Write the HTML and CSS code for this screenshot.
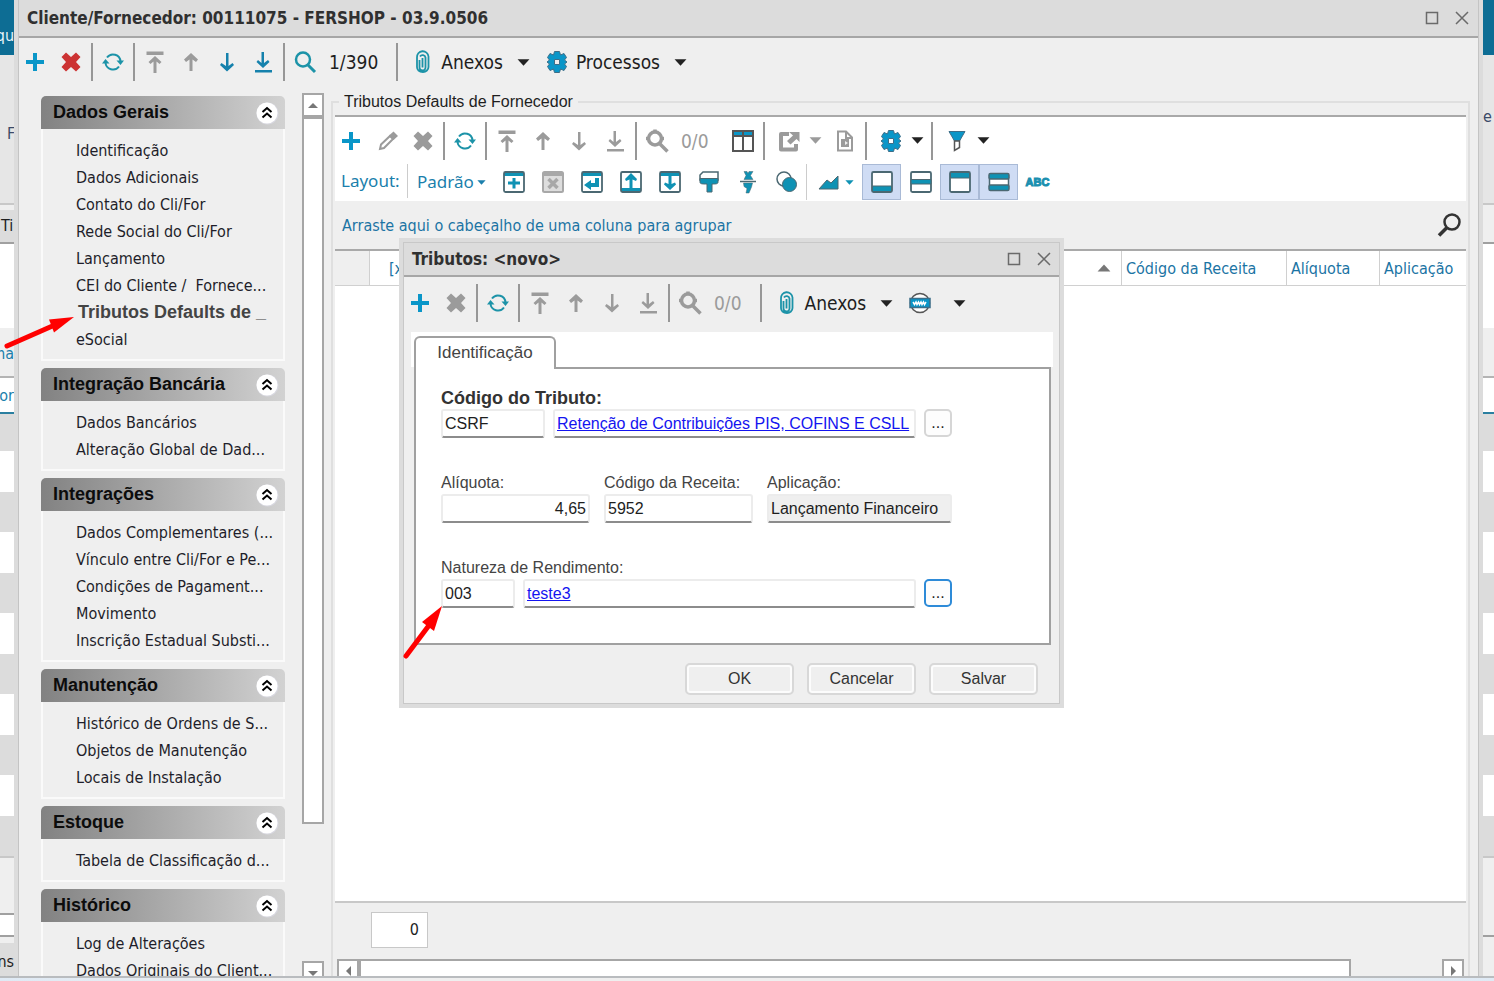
FILE: index.html
```html
<!DOCTYPE html>
<html lang="pt-BR">
  <head>
    <meta charset="UTF-8" />
    <title>Cliente/Fornecedor</title>
    <link rel="stylesheet" href="styles.css">
  </head>

  <body>
    <!-- icons -->
    <svg class="defs" aria-hidden="true">
      <symbol id="plus" viewBox="0 0 24 24"><path d="M10 3h4v7h7v4h-7v7h-4v-7H3v-4h7z" /></symbol>
      <symbol id="cross" viewBox="0 0 24 24"><path d="M7 2.500l5 4.500 5-4.500 4.500 4.500-4.500 5 4.500 5-4.500 4.500-5-4.500-5 4.500L2.500 17 7 12 2.500 7z" /></symbol>
      <symbol id="refresh" viewBox="0 0 24 24">
        <path d="M6 7.500a7.500 7.500 0 0 1 13.500 4M18 16.500a7.500 7.500 0 0 1-13.500-4" fill="none" stroke="currentColor" stroke-width="2" />
        <path d="M15.500 10.500H23L19.500 15zM1 13.500h7.500L4.500 9z" />
      </symbol>
      <symbol id="first" viewBox="0 0 24 24"><path d="M3.500 1.500h17v3.500h-17zM12 6l6.500 6-2 2-3-2.500V23h-3V11.500l-3 2.500-2-2z" /></symbol>
      <symbol id="up" viewBox="0 0 24 24"><path d="M12 3l7 6.500-2 2.500-3.500-2.500V21h-3V9.500L7 12 5 9.500z" /></symbol>
      <symbol id="down" viewBox="0 0 24 24"><path d="M12 21.500l-7-6.500 1.500-2 4.500 3V3h2.500v13l4-3 1.500 2z" /></symbol>
      <symbol id="last" viewBox="0 0 24 24"><path d="M12 18l-6.500-6 1.500-2 3.500 3V2h2.500v11l4-3 1.500 2zM4 20h17v2.500H4z" /></symbol>
      <symbol id="lens" viewBox="0 0 24 24"><g fill="none" stroke="currentColor"><circle cx="10" cy="9.500" r="7" stroke-width="2.500" /><path d="M15 15l7 7" stroke-width="3" /></g></symbol>
      <symbol id="lens-fat" viewBox="0 0 24 24"><g fill="none" stroke="currentColor"><circle cx="10" cy="9.500" r="6.500" stroke-width="3.500" /><path d="M10 0.500v3M1 9.500h3M16 9.500h3M15 15l7.500 7.500" stroke-width="3.500" /></g></symbol>
      <symbol id="clip" viewBox="0 0 24 24"><path d="M12.500 8v9.500M9.500 10v7.500a2.500 2.500 0 0 0 6 0V7.500a3 3 0 0 0-5.500-1M7 17V7.500a5.500 5.500 0 0 1 11.500-1V17a5.500 5 0 0 1-5.500 5c-4 0-6-2-6-5z" fill="none" stroke="currentColor" stroke-width="1.800" /></symbol>
      <symbol id="gear" viewBox="0 0 24 24"><path fill-rule="evenodd" stroke="#3d6e88" d="M9.500 1.500h5L15.500 5l3.500-1.500 2.500 4L19.500 10l2.500 2-2.500 2 2 2.500-2.500 4-3.500-1.500-1 3.500h-5l-1-3.500L5 20.500l-2.500-4 2-2.500L2 12l2.500-2-2-2.500 2.500-4L8.500 5zM9.500 9.500v5h5v-5z" /></symbol>
      <symbol id="pencil" viewBox="0 0 24 24"><path d="M6 15.500L15 7l3 3-9 9-4 1z" fill="none" stroke="currentColor" stroke-width="2" /><path d="M14 6.500l4.500-4 4.500 4.500-4.500 4z" /></symbol>
      <symbol id="columns" viewBox="0 0 24 24"><path d="M2 2h20v5H2z" /><path d="M2 2h20v20H2zM2 7h20M12 3v19" fill="none" stroke="#555" stroke-width="2" /></symbol>
      <symbol id="export" viewBox="0 0 24 24"><path d="M12 5H4v15.500h15V15" fill="none" stroke="currentColor" stroke-width="4" stroke-linejoin="round" /><path d="M12 3h10.500v10l-3-3-6 5.500-3.500-3.500 6-5.500z" /></symbol>
      <symbol id="doc" viewBox="0 0 24 24"><path d="M5 2.500h8l6 6v13H5zM13 3v6h6" fill="none" stroke="currentColor" stroke-width="2" /><path d="M8 10h8v8H8z" /><path d="M12 12l3 2-3 2" fill="#eee" /></symbol>
      <symbol id="funnel" viewBox="0 0 24 24"><path d="M4 2.500h16L14.500 12h-5z" stroke="#3d6e88" /><path d="M9.500 12v9.500l5-3V12z" fill="#fff" stroke="#555" stroke-width="1.500" /></symbol>
      <symbol id="web" viewBox="0 0 24 24"><circle cx="12" cy="12" r="9.500" fill="#fff" stroke="#555" stroke-width="1.500" /><path d="M2 7.500h20v9H2z" stroke="#3d6e88" stroke-width="1.500" /><path d="M5 11l1.500 2.500L8 11l1 2.500 1.500-2.500 1 2.500 1.500-2.500 1 2.500 1.500-2.500 1 2.500 1.500-2.500" fill="none" stroke="#fff" stroke-width="1.500" /></symbol>
      <symbol id="box-plus" viewBox="0 0 24 24"><path d="M2 2h20v4H2zM10.500 8h3v3.500H18v3h-4.500v4h-3v-4H6v-3h4.500z" /><rect x="2" y="2" width="20" height="20" rx="1.500" fill="none" stroke="#4b6872" stroke-width="1.800" /></symbol>
      <symbol id="box-x" viewBox="0 0 24 24"><rect x="2" y="2" width="20" height="20" rx="1.500" fill="#ddd" stroke="currentColor" stroke-width="2" /><path d="M2 2h20v4H2z" /><path d="M7.500 9l9 9M16.500 9l-9 9" stroke="currentColor" stroke-width="3.500" /></symbol>
      <symbol id="box-enter" viewBox="0 0 24 24"><path d="M2 2h20v4H2zM15 8h4v9h-8v3l-7-5 7-5v3h4z" /><rect x="2" y="2" width="20" height="20" rx="1.500" fill="none" stroke="#4b6872" stroke-width="1.800" /></symbol>
      <symbol id="box-up" viewBox="0 0 24 24"><path d="M2 18h20v4H2zM12 3l6 6-1 2-3.500-1.500V18h-3V9.500L7 11 6 9z" /><rect x="2" y="2" width="20" height="20" rx="1.500" fill="none" stroke="#4b6872" stroke-width="1.800" /></symbol>
      <symbol id="box-down" viewBox="0 0 24 24"><path d="M2 2h20v4H2zM10.500 6h3v8l3.500-1.500 1 2-6 5.500-6-5.500 1-2 3.500 1.500z" /><rect x="2" y="2" width="20" height="20" rx="1.500" fill="none" stroke="#4b6872" stroke-width="1.800" /></symbol>
      <symbol id="brush" viewBox="0 0 24 24"><path d="M6 2h15v8H3V5z" fill="#fff" stroke="#4b6872" stroke-width="1.500" /><path d="M3 8.500h18v3.500c0 2-2 2-6 2v8h-5v-8c-5 0-7 0-7-2z" stroke="#4b6872" /></symbol>
      <symbol id="split" viewBox="0 0 24 24"><path d="M8 1.500h3l1 2 1-2h4l-2.500 4 2.500 4H8l2-4zM7.500 13h9l-1 4-2.500 6h-3l1-4.500-3-2z" stroke="#4b6872" stroke-width="0.500" /><path d="M4 11.500h16" stroke="#4b6872" stroke-width="1.500" /></symbol>
      <symbol id="circles" viewBox="0 0 24 24"><circle cx="9" cy="9" r="7" fill="#fff" stroke="#4b6872" stroke-width="1.500" /><circle cx="14.500" cy="14.500" r="7" stroke="#4b6872" /></symbol>
      <symbol id="chart" viewBox="0 0 24 24"><path d="M2 19l8-9 4 3 7-7v13z" stroke="#4b6872" /></symbol>
      <symbol id="pane-bottom" viewBox="0 0 24 24"><rect x="2" y="2" width="20" height="20" rx="1.500" fill="#fff" stroke="#4b6872" stroke-width="1.800" /><path d="M2.500 16h19v5.500h-19z" stroke="#4b6872" /></symbol>
      <symbol id="pane-mid" viewBox="0 0 24 24"><rect x="2" y="2" width="20" height="20" rx="1.500" fill="#fff" stroke="#4b6872" stroke-width="1.800" /><path d="M2 9.500h20v4.500H2z" stroke="#4b6872" /></symbol>
      <symbol id="pane-top" viewBox="0 0 24 24"><rect x="2" y="2" width="20" height="20" rx="1.500" fill="#fff" stroke="#4b6872" stroke-width="1.800" /><path d="M2.500 2.500h19V8h-19z" stroke="#4b6872" /></symbol>
      <symbol id="pane-rows" viewBox="0 0 24 24"><rect x="2.500" y="8" width="19" height="8" fill="#fff" stroke="#4b6872" stroke-width="1.500" /><rect x="2" y="3.500" width="20" height="5.500" rx="1.500" stroke="#4b6872" stroke-width="1.500" /><rect x="2" y="15" width="20" height="5.500" rx="1.500" stroke="#4b6872" stroke-width="1.500" /></symbol>
      <symbol id="arrow" viewBox="0 0 12 12"><path d="M0.500 3h11L6 9z" /></symbol>
      <symbol id="chevrons" viewBox="0 0 24 24"><circle cx="12.500" cy="12.500" r="11" fill="#d8d8e0" /><circle cx="12" cy="12" r="10.500" fill="#fff" /><path d="M7.500 11L12 7l4.500 4M7.500 16.500l4.500-4 4.500 4" fill="none" stroke="#000" stroke-width="2" /></symbol>
      <symbol id="maximize" viewBox="0 0 14 14"><path d="M1.500 1.500h11v11h-11z" fill="none" stroke="currentColor" stroke-width="1.500" /></symbol>
      <symbol id="close" viewBox="0 0 14 14"><path d="M1 1l12 12M13 1L1 13" stroke="currentColor" stroke-width="1.500" /></symbol>
    </svg>

    <div class="desktop">
      <!-- window behind, left edge -->
      <div class="edge edge-left">
        <div class="e-blue"><span>qu</span></div>
        <div class="e-ribbon"><span>F</span></div>
        <div class="e-gap"></div>
        <div class="e-head"><span>Ti</span></div>
        <div class="e-white"></div>
        <div class="e-label"><span>ma</span></div>
        <div class="e-column"><span>or</span></div>
        <div class="e-total"></div>
        <div class="e-stripes"></div>
        <div class="e-blank"></div>
        <div class="e-field"></div>
        <div class="e-status"><span>ns</span></div>
      </div>

      <div class="window">
        <div class="titlebar">
          <h1>Cliente/Fornecedor: 00111075 - FERSHOP - 03.9.0506</h1>
          <button aria-label="Maximizar"><svg><use href="#maximize" /></svg></button>
          <button aria-label="Fechar"><svg><use href="#close" /></svg></button>
        </div>

        <div class="toolbar">
          <button class="blue" aria-label="Novo"><svg><use href="#plus" /></svg></button>
          <button class="red" aria-label="Excluir"><svg><use href="#cross" /></svg></button>
          <i class="sep"></i>
          <button class="teal" aria-label="Atualizar"><svg><use href="#refresh" /></svg></button>
          <i class="sep"></i>
          <button class="off" aria-label="Primeiro"><svg><use href="#first" /></svg></button>
          <button class="off" aria-label="Anterior"><svg><use href="#up" /></svg></button>
          <button class="navy" aria-label="Próximo"><svg><use href="#down" /></svg></button>
          <button class="navy" aria-label="Último"><svg><use href="#last" /></svg></button>
          <i class="sep"></i>
          <button class="teal" aria-label="Pesquisar"><svg><use href="#lens" /></svg></button>
          <span class="count">1/390</span>
          <i class="sep"></i>
          <button class="drop teal"><svg><use href="#clip" /></svg><span>Anexos</span><svg class="caret"><use href="#arrow" /></svg></button>
          <button class="drop blue"><svg><use href="#gear" /></svg><span>Processos</span><svg class="caret"><use href="#arrow" /></svg></button>
        </div>

        <div class="content">
          <nav class="sidebar">
            <section>
              <h2>Dados Gerais <svg><use href="#chevrons" /></svg></h2>
              <ul>
                <li><a href="#">Identificação</a></li>
                <li><a href="#">Dados Adicionais</a></li>
                <li><a href="#">Contato do Cli/For</a></li>
                <li><a href="#">Rede Social do Cli/For</a></li>
                <li><a href="#">Lançamento</a></li>
                <li><a href="#">CEI do Cliente /&nbsp; Fornece...</a></li>
                <li><a href="#" class="active">Tributos Defaults de _</a></li>
                <li><a href="#">eSocial</a></li>
              </ul>
            </section>
            <section>
              <h2>Integração Bancária <svg><use href="#chevrons" /></svg></h2>
              <ul>
                <li><a href="#">Dados Bancários</a></li>
                <li><a href="#">Alteração Global de Dad...</a></li>
              </ul>
            </section>
            <section>
              <h2>Integrações <svg><use href="#chevrons" /></svg></h2>
              <ul>
                <li><a href="#">Dados Complementares (...</a></li>
                <li><a href="#">Vínculo entre Cli/For e Pe...</a></li>
                <li><a href="#">Condições de Pagament...</a></li>
                <li><a href="#">Movimento</a></li>
                <li><a href="#">Inscrição Estadual Substi...</a></li>
              </ul>
            </section>
            <section>
              <h2>Manutenção <svg><use href="#chevrons" /></svg></h2>
              <ul>
                <li><a href="#">Histórico de Ordens de S...</a></li>
                <li><a href="#">Objetos de Manutenção</a></li>
                <li><a href="#">Locais de Instalação</a></li>
              </ul>
            </section>
            <section>
              <h2>Estoque <svg><use href="#chevrons" /></svg></h2>
              <ul>
                <li><a href="#">Tabela de Classificação d...</a></li>
              </ul>
            </section>
            <section>
              <h2>Histórico <svg><use href="#chevrons" /></svg></h2>
              <ul>
                <li><a href="#">Log de Alterações</a></li>
                <li><a href="#">Dados Originais do Client...</a></li>
              </ul>
            </section>
          </nav>

          <div class="vscroll">
            <button class="scroll-up" aria-label="Subir"></button>
            <div class="thumb"></div>
            <button class="scroll-down" aria-label="Descer"></button>
          </div>

          <fieldset class="panel">
            <legend>Tributos Defaults de Fornecedor</legend>
            <div class="bars">
              <div class="toolbar">
                <button class="blue" aria-label="Novo"><svg><use href="#plus" /></svg></button>
                <button class="off" aria-label="Editar"><svg><use href="#pencil" /></svg></button>
                <button class="off" aria-label="Excluir"><svg><use href="#cross" /></svg></button>
                <i class="sep"></i>
                <button class="teal" aria-label="Atualizar"><svg><use href="#refresh" /></svg></button>
                <i class="sep"></i>
                <button class="off" aria-label="Primeiro"><svg><use href="#first" /></svg></button>
                <button class="off" aria-label="Anterior"><svg><use href="#up" /></svg></button>
                <button class="off" aria-label="Próximo"><svg><use href="#down" /></svg></button>
                <button class="off" aria-label="Último"><svg><use href="#last" /></svg></button>
                <i class="sep"></i>
                <button class="off" aria-label="Pesquisar"><svg><use href="#lens-fat" /></svg></button>
                <span class="count off">0/0</span>
                <button class="blue" aria-label="Colunas"><svg><use href="#columns" /></svg></button>
                <i class="sep"></i>
                <button class="drop icon-only off" aria-label="Exportar"><svg><use href="#export" /></svg><svg class="caret"><use href="#arrow" /></svg></button>
                <button class="off" aria-label="Relatório"><svg><use href="#doc" /></svg></button>
                <i class="sep"></i>
                <button class="drop icon-only blue" aria-label="Processos"><svg><use href="#gear" /></svg><svg class="caret"><use href="#arrow" /></svg></button>
                <i class="sep"></i>
                <button class="drop icon-only blue" aria-label="Filtro"><svg><use href="#funnel" /></svg><svg class="caret"><use href="#arrow" /></svg></button>
              </div>
              <div class="layout-bar">
                <span class="layout-label">Layout:</span>
                <button class="layout-name">Padrão <svg><use href="#arrow" /></svg></button>
                <button aria-label="Novo layout"><svg><use href="#box-plus" /></svg></button>
                <button class="off" aria-label="Excluir layout"><svg><use href="#box-x" /></svg></button>
                <button aria-label="Restaurar layout"><svg><use href="#box-enter" /></svg></button>
                <button aria-label="Exportar layout"><svg><use href="#box-up" /></svg></button>
                <button aria-label="Importar layout"><svg><use href="#box-down" /></svg></button>
                <button aria-label="Formatar"><svg><use href="#brush" /></svg></button>
                <button aria-label="Dividir"><svg><use href="#split" /></svg></button>
                <button aria-label="Condições"><svg><use href="#circles" /></svg></button>
                <button class="layout-chart" aria-label="Gráfico"><svg><use href="#chart" /></svg><svg class="small"><use href="#arrow" /></svg></button>
                <button class="on" aria-label="Rodapé"><svg><use href="#pane-bottom" /></svg></button>
                <button aria-label="Rodapé de grupo"><svg><use href="#pane-mid" /></svg></button>
                <button class="on" aria-label="Agrupamento"><svg><use href="#pane-top" /></svg></button>
                <button class="on" aria-label="Linhas"><svg><use href="#pane-rows" /></svg></button>
                <button class="abc">ABC</button>
              </div>
            </div>

            <div class="group-by">
              <span>Arraste aqui o cabeçalho de uma coluna para agrupar</span>
              <button aria-label="Localizar"><svg viewBox="0 0 24 24"><circle cx="15" cy="9" r="7.500" fill="none" stroke="#333" stroke-width="2.500" /><path d="M10 14.500l-8 8" stroke="#333" stroke-width="3.500" /></svg></button>
            </div>

            <div class="grid">
              <table>
                <thead>
                  <tr>
                    <th class="col-mark"></th>
                    <th class="col-main"><div>[x]<svg><use href="#arrow" /></svg></div></th>
                    <th class="col-code">Código da Receita</th>
                    <th class="col-rate">Alíquota</th>
                    <th class="col-use">Aplicação</th>
                  </tr>
                </thead>
              </table>
            </div>

            <div class="summary"><output>0</output></div>

            <div class="hscroll">
              <button class="scroll-left" aria-label="Esquerda"></button>
              <div class="thumb"></div>
              <button class="scroll-right" aria-label="Direita"></button>
            </div>
          </fieldset>
        </div>
      </div>

      <!-- window behind, right edge -->
      <div class="edge edge-right">
        <div class="e-blue"></div>
        <div class="e-ribbon"><span>e</span></div>
        <div class="e-gap"></div>
        <div class="e-head"></div>
        <div class="e-white"></div>
        <div class="e-label"></div>
        <div class="e-column"></div>
        <div class="e-total"></div>
        <div class="e-stripes"></div>
        <div class="e-blank"></div>
        <div class="e-field"></div>
        <div class="e-status"></div>
      </div>

      <div class="dialog" role="dialog" aria-labelledby="dialog-title">
        <div class="titlebar">
          <h1 id="dialog-title">Tributos: &lt;novo&gt;</h1>
          <button aria-label="Maximizar"><svg><use href="#maximize" /></svg></button>
          <button aria-label="Fechar"><svg><use href="#close" /></svg></button>
        </div>
        <div class="toolbar">
          <button class="blue" aria-label="Novo"><svg><use href="#plus" /></svg></button>
          <button class="off" aria-label="Excluir"><svg><use href="#cross" /></svg></button>
          <i class="sep"></i>
          <button class="teal" aria-label="Atualizar"><svg><use href="#refresh" /></svg></button>
          <i class="sep"></i>
          <button class="off" aria-label="Primeiro"><svg><use href="#first" /></svg></button>
          <button class="off" aria-label="Anterior"><svg><use href="#up" /></svg></button>
          <button class="off" aria-label="Próximo"><svg><use href="#down" /></svg></button>
          <button class="off" aria-label="Último"><svg><use href="#last" /></svg></button>
          <i class="sep"></i>
          <button class="off" aria-label="Pesquisar"><svg><use href="#lens-fat" /></svg></button>
          <span class="count off">0/0</span>
          <i class="sep"></i>
          <button class="drop teal"><svg><use href="#clip" /></svg><span>Anexos</span><svg class="caret"><use href="#arrow" /></svg></button>
          <button class="drop wide blue" aria-label="Web"><svg><use href="#web" /></svg><svg class="caret"><use href="#arrow" /></svg></button>
        </div>

        <form>
          <div class="tabs">
            <button type="button" class="tab">Identificação</button>
          </div>
          <div class="page">
            <div class="field">
              <label class="required" for="tributo">Código do Tributo:</label>
              <div class="line">
                <input id="tributo" class="w-code" type="text" value="CSRF" />
                <div class="linkbox"><a href="#">Retenção de Contribuições PIS, COFINS E CSLL</a></div>
                <button type="button" class="more">...</button>
              </div>
            </div>
            <div class="line columns">
              <div class="field w-medium">
                <label for="aliquota">Alíquota:</label>
                <input id="aliquota" class="number" type="text" value="4,65" />
              </div>
              <div class="field w-medium">
                <label for="receita">Código da Receita:</label>
                <input id="receita" type="text" value="5952" />
              </div>
              <div class="field w-large">
                <label for="aplicacao">Aplicação:</label>
                <input id="aplicacao" type="text" value="Lançamento Financeiro" readonly />
              </div>
            </div>
            <div class="field">
              <label for="natureza">Natureza de Rendimento:</label>
              <div class="line">
                <input id="natureza" class="w-small" type="text" value="003" />
                <div class="linkbox"><a href="#">teste3</a></div>
                <button type="button" class="more focus">...</button>
              </div>
            </div>
          </div>
          <div class="actions">
            <button type="button">OK</button>
            <button type="button">Cancelar</button>
            <button type="button">Salvar</button>
          </div>
        </form>
      </div>

      <!-- red pointers -->
      <svg class="pointer pointer-menu" viewBox="0 0 72 36"><path d="M5 31L55 9" stroke="#f00" stroke-width="5" stroke-linecap="round" /><path d="M72 2L47 4.500l5 13z" fill="#f00" /></svg>
      <svg class="pointer pointer-field" viewBox="0 0 42 56"><path d="M4 52L28 20" stroke="#f00" stroke-width="5" stroke-linecap="round" /><path d="M40 2L20 18l12 9z" fill="#f00" /></svg>
    </div>
    <div class="taskbar"></div>
  </body>
</html>
```
FILE: styles.css
```css
* {
  box-sizing: border-box;
}

body {
  margin: 0;
  height: 100vh;
  display: flex;
  flex-direction: column;
  overflow: hidden;
  background: #efefef;
  color: #1e1e1e;
  font-family: "DejaVu Sans Condensed", "DejaVu Sans", sans-serif;
  font-size: 16px;
}

button {
  margin: 0;
  padding: 0;
  border: none;
  background: none;
  color: inherit;
  font: inherit;
}

svg {
  fill: currentColor;
  flex: none;
}

.defs {
  position: absolute;
  width: 0;
  height: 0;
}

.desktop {
  position: relative;
  flex: 1;
  min-height: 0;
  display: flex;
  overflow: hidden;
}

.taskbar {
  height: 5px;
  border-top: 2px solid #b9bcbf;
  background: linear-gradient(90deg, #dfeaf5, #efefef 20%, #efefef 80%, #dfeaf5);
}

/* window behind */
.edge {
  display: flex;
  flex-direction: column;
  overflow: hidden;
  white-space: nowrap;
}

.edge-left {
  width: 14px;
}

.edge-right {
  width: 11px;
}

.edge > div {
  flex: none;
}

.e-blue {
  height: 55px;
  padding-top: 26px;
  background: #0d6d94;
  color: #e8f4fa;
}

.edge-left .e-blue {
  display: flex;
  justify-content: flex-end;
}

.e-ribbon {
  height: 148px;
  padding: 69px 0 0 7px;
  background: #e6e6e6;
  color: #3b4a68;
}

.edge-right .e-ribbon {
  padding: 52px 0 0;
}

.e-gap {
  height: 7px;
  border-top: 2px solid #c8c8c8;
}

.e-head {
  height: 34px;
  padding: 6px 0 0 1px;
  border-bottom: 2px solid #a0a0a0;
  background: #dcdcdc;
}

.edge-right .e-head {
  background: #efefef;
}

.e-white {
  height: 84px;
  background: #fff;
}

.e-label {
  height: 50px;
  padding-top: 16px;
  border-bottom: 2px solid #b4b4b4;
  color: #1b7fac;
}

.edge-left .e-label {
  display: flex;
  justify-content: flex-end;
}

.e-column {
  height: 36px;
  padding-top: 8px;
  border-bottom: 2px solid #2a7fa0;
  background: #fff;
  color: #1b7fac;
}

.edge-left .e-column,
.edge-left .e-status {
  display: flex;
  justify-content: flex-end;
}

.e-total {
  height: 37px;
  background: #dcdcdc;
}

.e-stripes {
  height: 405px;
  background: repeating-linear-gradient(#fff 0 41px, #dcdcdc 41px 81px);
}

.e-blank {
  height: 57px;
  border-top: 2px solid #c8c8c8;
}

.e-field {
  height: 24px;
  border-top: 2px solid #a0a0a0;
  border-bottom: 2px solid #a0a0a0;
  background: #fff;
}

.edge-right .e-field {
  border-top: none;
  background: none;
}

.e-status {
  height: 60px;
  padding-top: 9px;
  border-top: 6px solid #efefef;
  background: #dcdcdc;
}

.edge-right .e-status {
  background: #efefef;
}

/* main window */
.window {
  flex: 1;
  min-width: 0;
  display: flex;
  flex-direction: column;
  border: solid #dcdcdc;
  border-width: 0 4px;
  padding: 0 1px;
  background: #c4c4c4;
}

.titlebar {
  flex: none;
  height: 38px;
  display: flex;
  align-items: center;
  gap: 16px;
  padding: 0 9px 0 8px;
  border-bottom: 2px solid #a6a6a6;
  background: #dcdcdc;
  color: #6a6a6a;
}

.titlebar h1 {
  flex: 1;
  margin: 0;
  color: #303030;
  font-size: 17px;
}

.titlebar button,
.titlebar svg {
  display: block;
  width: 14px;
  height: 14px;
}

.toolbar {
  flex: none;
  height: 48px;
  display: flex;
  align-items: center;
  gap: 4px;
  background: #efefef;
  font-size: 19px;
}

.toolbar button {
  width: 32px;
  height: 36px;
  display: flex;
  align-items: center;
  justify-content: center;
}

.toolbar svg {
  width: 24px;
  height: 24px;
}

.toolbar .sep {
  width: 2px;
  height: 38px;
  background: #979797;
}

.toolbar .count {
  padding: 0 14px 0 4px;
}

.toolbar .drop {
  width: auto;
  justify-content: flex-start;
  padding: 0 3px 0 8px;
}

.toolbar .drop span {
  padding: 0 14px 0 7px;
  color: #1e1e1e;
}

.toolbar .icon-only {
  gap: 8px;
}

.toolbar .wide {
  gap: 21px;
}

.toolbar .caret {
  width: 13px;
  height: 13px;
  color: #222;
}

.toolbar .off,
.toolbar .off .caret {
  color: #9b9b9b;
}

.blue {
  color: #0a96c8;
}

.teal {
  color: #1c93a8;
}

.navy {
  color: #1581ac;
}

.red {
  color: #cc3333;
}

.content {
  flex: 1;
  min-height: 0;
  display: flex;
  background: #efefef;
}

/* sidebar */
.sidebar {
  width: 266px;
  padding: 10px 0 0 22px;
  overflow: hidden;
}

.sidebar section {
  margin-bottom: 7px;
}

.sidebar h2 {
  height: 33px;
  margin: 0;
  display: flex;
  align-items: center;
  justify-content: space-between;
  padding: 0 6px 0 12px;
  border-radius: 5px 5px 0 0;
  background: linear-gradient(90deg, #828282, #d2d2d2);
  color: #0c0c0c;
  font-family: "Liberation Sans", Arial, sans-serif;
  font-size: 18px;
}

.sidebar h2 svg {
  width: 24px;
  height: 24px;
}

.sidebar ul {
  margin: 0;
  padding: 8px 0 6px;
  border: 2px solid #fafafa;
  border-top: none;
  list-style: none;
}

.sidebar li {
  height: 27px;
  padding-left: 33px;
  line-height: 27px;
  white-space: nowrap;
}

.sidebar a {
  color: #1e1e2a;
  text-decoration: none;
}

.sidebar a.active {
  padding-left: 2px;
  color: #444;
  font-family: "Liberation Sans", Arial, sans-serif;
  font-size: 18px;
  font-weight: bold;
}

/* scrollbars */
.vscroll {
  width: 22px;
  margin: 7px 7px 0 17px;
  height: 892px;
  display: flex;
  flex-direction: column;
  flex: none;
}

.thumb {
  border: 2px solid #a6a6a6;
  background: #fff;
}

.vscroll .thumb {
  flex: none;
  height: 707px;
}

.vscroll button,
.hscroll button {
  width: 22px;
  height: 24px;
  flex: none;
  display: flex;
  align-items: center;
  justify-content: center;
  border: 2px solid #a6a6a6;
  background: #fff;
}

.vscroll button::before,
.hscroll button::before {
  content: "";
  border: 5px solid transparent;
}

.vscroll .scroll-up::before {
  border-top: none;
  border-bottom-color: #777;
}

.vscroll .scroll-down {
  margin-top: auto;
}

.vscroll .scroll-down::before {
  border-bottom: none;
  border-top-color: #777;
}

.hscroll {
  flex: none;
  height: 17px;
  display: flex;
  align-items: flex-start;
  overflow: hidden;
  padding: 0 2px;
}

.hscroll .thumb {
  flex: none;
  width: 88%;
  height: 24px;
}

.hscroll .scroll-left::before {
  border-left: none;
  border-right-color: #777;
}

.hscroll .scroll-right {
  margin-left: auto;
}

.hscroll .scroll-right::before {
  border-right: none;
  border-left-color: #777;
}

/* tax panel */
.panel {
  flex: 1;
  min-width: 0;
  display: flex;
  flex-direction: column;
  margin: 6px 8px 0 0;
  padding: 4px 2px 0;
  border: 2px solid #dfdfdf;
  border-bottom: none;
}

.panel legend {
  margin-left: 4px;
  padding: 0 5px;
  line-height: 19px;
  font-family: "Liberation Sans", Arial, sans-serif;
}

.bars {
  flex: none;
  border-top: 2px solid #a9a9a9;
  background: #fff;
}

.bars .toolbar {
  height: 47px;
  background: none;
}

.layout-bar {
  height: 37px;
  display: flex;
  align-items: flex-start;
  color: #0f92b4;
}

.layout-bar button {
  width: 39px;
  height: 36px;
  flex: none;
  display: flex;
  align-items: center;
  justify-content: center;
}

.layout-bar svg {
  width: 24px;
  height: 24px;
}

.layout-label,
.layout-bar .layout-name {
  color: #1b7fac;
  font-family: "Noto Sans", sans-serif;
  font-size: 17px;
  line-height: 34px;
}

.layout-label {
  width: 73px;
  padding-left: 6px;
  border-right: 1px solid #ccc;
}

.layout-bar .layout-name {
  width: 86px;
  gap: 3px;
  padding-left: 9px;
  justify-content: flex-start;
}

.layout-name svg,
.layout-bar .small {
  width: 9px;
  height: 9px;
}

.layout-bar .layout-chart {
  width: 56px;
  gap: 4px;
  border-left: 1px solid #ccc;
  padding-left: 2px;
}

.layout-bar .off {
  color: #a8a8a8;
}

.layout-bar .on {
  border: 1px solid #a9bad6;
  background: #cfdcf4;
}

.layout-bar .abc {
  color: #1b8fb0;
  font-family: "Liberation Sans", Arial, sans-serif;
  font-size: 11px;
  font-weight: bold;
  -webkit-text-stroke: 1px #1b8fb0;
}

.group-by {
  flex: none;
  height: 48px;
  display: flex;
  align-items: center;
  justify-content: space-between;
  padding: 0 5px 0 7px;
  color: #1b74a4;
}

.group-by svg {
  display: block;
  width: 24px;
  height: 24px;
}

.grid {
  flex: 1;
  min-height: 0;
  border-top: 2px solid #a9a9a9;
  border-bottom: 2px solid #c8c8c8;
  background: #fff;
}

.grid table {
  width: 100%;
  table-layout: fixed;
  border-collapse: separate;
  border-spacing: 0;
}

.grid th {
  height: 35px;
  padding: 0 0 0 4px;
  border-right: 1px solid #d0d0d0;
  border-bottom: 1px solid #d0d0d0;
  color: #1b74a4;
  font-weight: normal;
  text-align: left;
  white-space: nowrap;
}

.grid th:last-child {
  border-right: none;
}

.grid .col-mark {
  width: 35px;
  background: #efefef;
}

.grid .col-main div {
  display: flex;
  align-items: center;
  justify-content: space-between;
  padding: 0 10px 0 15px;
}

.grid .col-main svg {
  width: 14px;
  height: 14px;
  color: #777;
  transform: rotate(180deg);
}

.col-code {
  width: 165px;
}

.col-rate {
  width: 93px;
}

.col-use {
  width: 86px;
}

.summary {
  flex: none;
  height: 56px;
  padding: 9px 0 0 36px;
}

.summary output {
  display: block;
  width: 57px;
  height: 36px;
  padding-right: 8px;
  border: 1px solid #c8c8c8;
  background: #fff;
  line-height: 34px;
  text-align: right;
}

/* tax dialog */
.dialog {
  position: absolute;
  left: 399px;
  top: 238px;
  width: 665px;
  border: 4px solid #dcdcdc;
  outline: 1px solid #c8c8c8;
  outline-offset: -5px;
  padding: 1px;
  background: #efefef;
  font-family: "Liberation Sans", Arial, sans-serif;
}

.dialog .titlebar {
  height: 34px;
  padding-right: 8px;
}

.dialog .titlebar,
.dialog .toolbar {
  font-family: "DejaVu Sans Condensed", "DejaVu Sans", sans-serif;
}

.dialog .toolbar {
  height: 52px;
}

.dialog form {
  margin: 3px 6px 8px 7px;
}

.tabs {
  height: 35px;
  padding: 4px 0 0 3px;
  background: #fff;
}

.tab {
  position: relative;
  width: 142px;
  height: 31px;
  border: solid #a0a0a0;
  border-width: 2px 2px 0;
  border-radius: 6px 6px 0 0;
  background: #fff;
  color: #444;
  font-size: 17px;
}

/* hides the page border under the open tab */
.tab::after {
  content: "";
  position: absolute;
  left: 0;
  right: 0;
  bottom: -2px;
  height: 2px;
  background: #fff;
}

.page {
  display: flex;
  flex-direction: column;
  gap: 34px;
  margin: 0 2px 0 3px;
  padding: 18px 97px 35px 25px;
  border: 2px solid #a0a0a0;
  background: #fff;
}

.field label {
  display: block;
  height: 22px;
  line-height: 22px;
  color: #444;
}

.field .required {
  color: #333;
  font-size: 18px;
  font-weight: bold;
}

.line {
  display: flex;
  gap: 8px;
}

.columns {
  gap: 14px;
}

.field input,
.linkbox {
  width: 100%;
  height: 29px;
  margin: 0;
  padding: 0 2px;
  border: 2px solid #ececec;
  border-bottom-color: #8c8c8c;
  border-radius: 3px;
  background: #fff;
  color: #1e1e1e;
  font: inherit;
}

.field input[readonly] {
  background: #efefef;
}

.field .number {
  text-align: right;
}

.field .w-code {
  width: 104px;
}

.w-medium {
  width: 149px;
}

.w-large {
  width: 185px;
}

.field .w-small {
  width: 74px;
}

.linkbox {
  flex: 1;
  line-height: 25px;
  white-space: nowrap;
}

.linkbox a {
  color: #1414f0;
}

.more {
  width: 28px;
  height: 28px;
  flex: none;
  border: 2px solid #d6d6d6;
  border-radius: 5px;
  background: #fdfdfd;
}

.more.focus {
  border-color: #2e8bd8;
}

.actions {
  display: flex;
  justify-content: flex-end;
  gap: 13px;
  padding: 18px 15px 0 0;
}

.actions button {
  width: 109px;
  height: 32px;
  border: 2px solid #d8d8d8;
  border-radius: 5px;
  background: #efefef;
  box-shadow: inset 0 0 0 2px #fcfcfc;
  color: #333;
}

.pointer {
  position: absolute;
  fill: none;
  pointer-events: none;
}

.pointer-menu {
  left: 2px;
  top: 315px;
  width: 72px;
  height: 36px;
}

.pointer-field {
  left: 402px;
  top: 604px;
  width: 42px;
  height: 56px;
}
```
